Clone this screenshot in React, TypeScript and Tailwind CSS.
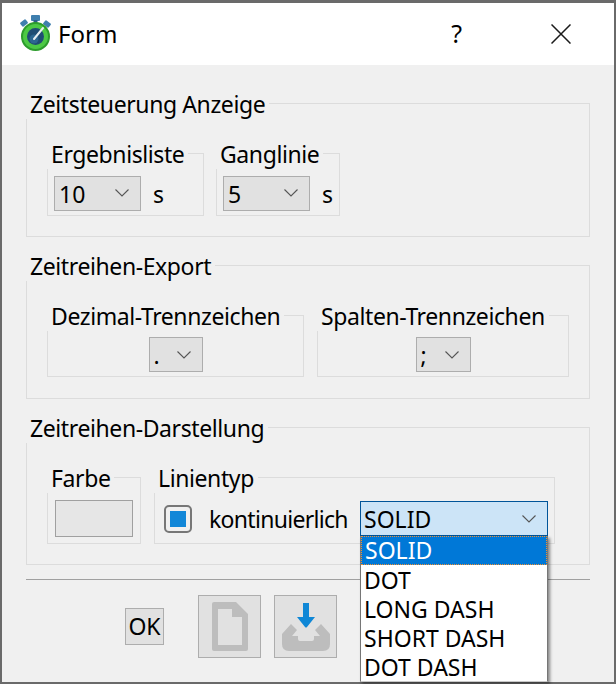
import React from 'react';

const FONT = "font-['Noto_Sans','Open_Sans',sans-serif]";

const Chevron: React.FC<{ className?: string }> = ({ className }) => (
  <svg width="14" height="8" viewBox="0 0 14 8" fill="none" className={className}>
    <polyline points="0.5,0.5 7,7 13.5,0.5" stroke="#555" strokeWidth="1.1" />
  </svg>
);

const GroupBox: React.FC<{ title: string; className?: string; children: React.ReactNode }> = ({
  title,
  className,
  children,
}) => (
  <div className={`border border-[#dcdcdc] ${className ?? ''}`}>
    <div className="-mt-[15px] -ml-px h-[30px] w-fit whitespace-nowrap bg-[#f0f0f0] pl-[4px] pr-[4px] text-[23px] leading-[30px] tracking-[-0.4px]">
      {title}
    </div>
    {children}
  </div>
);

const Combo: React.FC<{ value: string; className?: string }> = ({ value, className }) => (
  <div
    className={`flex h-[35px] items-center justify-between border border-[#adadad] bg-[#e1e1e1] pl-[4px] pr-[11px] text-[23px] ${className ?? ''}`}
  >
    <span className="pt-[2px]">{value}</span>
    <Chevron />
  </div>
);

const Stopwatch = () => (
  <svg width="32" height="38" viewBox="0 0 32 38" className="shrink-0">
    <rect x="12" y="0" width="9" height="6" rx="1" fill="#3f7fae" />
    <rect x="14.5" y="5" width="4" height="4" fill="#2d5f86" />
    <rect x="1.5" y="5.5" width="7" height="5" rx="1" fill="#3f7fae" transform="rotate(-38 5 8)" />
    <rect x="24.5" y="6.5" width="7" height="5" rx="1" fill="#3f7fae" transform="rotate(38 28 9)" />
    <circle cx="16.5" cy="21.5" r="14.5" fill="#2c9c2c" />
    <circle cx="16.5" cy="21.5" r="12.5" fill="#4cc944" />
    <circle cx="16.5" cy="21.5" r="8.5" fill="#1f4d73" />
    <circle cx="15" cy="24" r="4.5" fill="#2c6690" />
    <path d="M15 24 L24 13" stroke="#e8eef2" strokeWidth="2" strokeLinecap="round" />
  </svg>
);

const FileIcon = () => (
  <svg width="36" height="49" viewBox="0 0 36 49">
    <path
      fillRule="evenodd"
      d="M2 0 H24 L36 12 V47 Q36 49 34 49 H2 Q0 49 0 47 V2 Q0 0 2 0 Z M6 7 V43 H30 V15 H20 V7 Z"
      fill="#bdbdbd"
    />
  </svg>
);

const SaveIcon = () => (
  <svg width="48" height="48" viewBox="0 0 48 48">
    <path
      d="M9 21 L0 31 V41 Q0 48 7 48 H41 Q48 48 48 41 V31 L39 21 L33 27 L38 33 H32 V36 Q32 38 30 38 H18 Q16 38 16 36 V33 H10 L15 27 Z"
      fill="#bdbdbd"
    />
    <path d="M21 0 H27 V14 H33 L25 24 Q24 25 23 24 L15 14 H21 Z" fill="#0f87d6" />
  </svg>
);

const options = ['SOLID', 'DOT', 'LONG DASH', 'SHORT DASH', 'DOT DASH'];

const App: React.FC = () => {
  return (
    <div className={`relative h-[684px] w-[616px] overflow-hidden bg-[#6a6a6a] pt-[3px] text-black ${FONT}`}>
      <div className="ml-[2px] flex h-[679px] w-[612px] flex-col bg-[#f0f0f0]">
        {/* title bar */}
        <div className="flex h-[62px] shrink-0 items-center bg-white pl-[17px] pr-[43px]">
          <Stopwatch />
          <span className="ml-[7px] text-[24px]">Form</span>
          <span className="ml-auto text-[25px]">?</span>
          <svg width="20" height="20" viewBox="0 0 20 20" className="ml-[89px]">
            <path d="M0.5 0.5 L19.5 19.5 M19.5 0.5 L0.5 19.5" stroke="#1a1a1a" strokeWidth="1.5" />
          </svg>
        </div>

        <div className="flex flex-col px-[24px] pt-[38px]">
          <GroupBox title="Zeitsteuerung Anzeige" className="h-[134px]">
            <div className="mt-[34px] flex gap-[12px] pl-[20px]">
              <GroupBox title="Ergebnisliste" className="h-[63px] w-[157px]">
                <div className="flex items-center gap-[12px] pl-[6px] pt-[6px]">
                  <Combo value="10" className="w-[87px]" />
                  <span className="pt-[2px] text-[23px]">s</span>
                </div>
              </GroupBox>
              <GroupBox title="Ganglinie" className="h-[63px] w-[124px]">
                <div className="flex items-center gap-[12px] pl-[6px] pt-[6px]">
                  <Combo value="5" className="w-[87px]" />
                  <span className="pt-[2px] text-[23px]">s</span>
                </div>
              </GroupBox>
            </div>
          </GroupBox>

          <GroupBox title="Zeitreihen-Export" className="mt-[28px] h-[134px]">
            <div className="mt-[34px] flex gap-[13px] pl-[20px]">
              <GroupBox title="Dezimal-Trennzeichen" className="h-[62px] w-[257px]">
                <div className="flex justify-center pt-[6px]">
                  <Combo value="." className="w-[54px]" />
                </div>
              </GroupBox>
              <GroupBox title="Spalten-Trennzeichen" className="h-[62px] w-[252px]">
                <div className="flex justify-center pt-[6px]">
                  <Combo value=";" className="w-[55px]" />
                </div>
              </GroupBox>
            </div>
          </GroupBox>

          <GroupBox title="Zeitreihen-Darstellung" className="mt-[28px] h-[138px]">
            <div className="mt-[34px] flex gap-[13px] pl-[20px]">
              <GroupBox title="Farbe" className="h-[67px] w-[94px]">
                <div className="pl-[7px] pt-[7px]">
                  <div className="h-[37px] w-[78px] border border-[#a0a0a0] bg-[#e6e6e6]" />
                </div>
              </GroupBox>
              <GroupBox title="Linientyp" className="h-[67px] w-[401px]">
                <div className="flex items-center pl-[9px] pt-[9px]">
                  <div className="flex h-[28px] w-[28px] items-center justify-center rounded-[5px] border-2 border-[#777] bg-[#f0f0f0]">
                    <div className="h-[16px] w-[16px] bg-[#1287d8]" />
                  </div>
                  <span className="ml-[17px] text-[23px] tracking-[-0.7px]">kontinuierlich</span>
                </div>
              </GroupBox>
            </div>
          </GroupBox>

          <div className="mt-[14px] h-px bg-[#a0a0a0]" />

          <div className="flex items-center pl-[99px] pt-[15px]">
            <button className="h-[37px] w-[39px] border border-[#adadad] bg-[#e1e1e1] text-[23px]">OK</button>
            <button className="ml-[34px] flex h-[63px] w-[63px] items-center justify-center border border-[#adadad] bg-[#e1e1e1]">
              <FileIcon />
            </button>
            <button className="ml-[13px] flex h-[63px] w-[63px] items-center justify-center border border-[#adadad] bg-[#e1e1e1]">
              <SaveIcon />
            </button>
          </div>
        </div>
      </div>

      {/* open combo with its list, lies over the dialog */}
      <div className="absolute left-[360px] top-[501px] w-[188px] text-[23px]">
        <div className="flex h-[35px] items-center justify-between border border-[#005499] bg-[#cce4f7] pl-[3px] pr-[11px]">
          <span className="pt-[2px]">SOLID</span>
          <Chevron />
        </div>
        <div className="h-[146px] border-x border-b border-x-[#767676] border-b-[#c8c8c8] bg-white shadow-[2px_2px_3px_rgba(0,0,0,0.45)]">
          {options.map((o, i) => (
            <div
              key={o}
              className={`h-[29px] pl-[3px] ${
                i === 0
                  ? 'border border-dotted border-[#f09030] bg-[#0078d7] pl-[2px] leading-[27px] text-white'
                  : 'leading-[30px]'
              }`}
            >
              {o}
            </div>
          ))}
        </div>
      </div>
    </div>
  );
};

export default App;
